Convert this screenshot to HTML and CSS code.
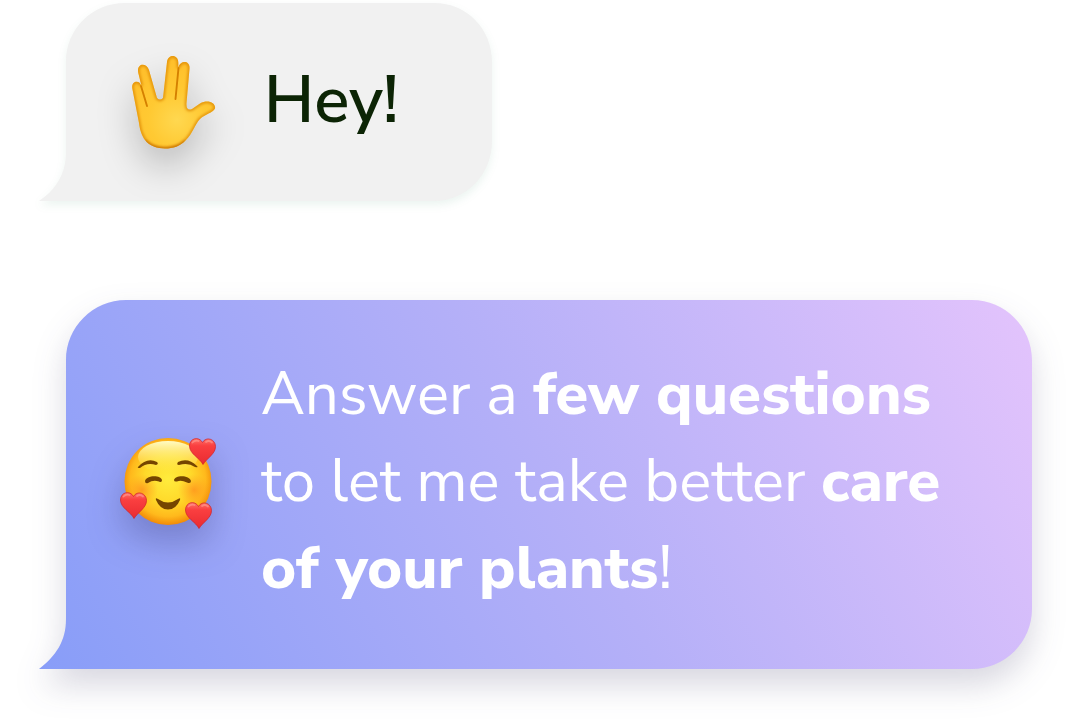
FILE: index.html
```html
<!DOCTYPE html>
<html lang="en">
<head>
<meta charset="utf-8">
<title>Plant chat</title>
<link rel="stylesheet" href="styles.css">
</head>
<body>
<main class="chat">
  <section class="bubble bubble-hello">
    <svg class="shape shape-hello" width="454" height="198" viewBox="0 0 454 198" aria-hidden="true">
      <path fill="#f1f1f1" d="M86 0H395C428 0 453 26 453 59V138C453 171 428 198 395 198H0C17 187 27 170 27 150V59C27 26 53 0 86 0Z"/>
    </svg>
    <svg class="emoji emoji-hand" width="84" height="96" viewBox="0 0 84 96" role="img" aria-label="Raised hand">
      <defs>
        <radialGradient id="palm" gradientUnits="userSpaceOnUse" cx="45" cy="65" r="57">
          <stop offset="0" stop-color="#ffd850"/><stop offset=".5" stop-color="#ffc932"/><stop offset="1" stop-color="#ffc02c"/>
        </radialGradient>
        <path id="hand" d="M7 68L.4 34C-1.500 26 7.500 24 9.500 31L6.300 18C4 8 14.500 7 17 15L25 43Q28 46 31 43L35 7C36-1 46.500-1 46.300 8V13C48 5 58.500 5 57.500 14L54.500 48Q54 56.500 60 54L68 48.500C76 44 84 48 83 53.500C81 58 73 59 68 64C63 69 61 78 54 85C48 91.500 41 93.500 33 93.500C17 93 9 85 7 68Z"/>
        <clipPath id="handClip"><use href="#hand"/></clipPath>
        <filter id="soft" x="-20%" y="-20%" width="140%" height="140%"><feGaussianBlur stdDeviation="1.5"/></filter>
        <filter id="fine" x="-20%" y="-20%" width="140%" height="140%"><feGaussianBlur stdDeviation=".6"/></filter>
      </defs>
      <g clip-path="url(#handClip)">
        <rect x="-2" y="-2" width="88" height="98" fill="url(#palm)"/>
        <use href="#hand" fill="none" stroke="#dc8500" stroke-width="2.600" filter="url(#soft)"/>
        <path fill="none" stroke="#b96200" stroke-width="2.500" filter="url(#soft)" d="M12 86C22 96.500 44 97 54 87"/>
        <path fill="none" stroke="#d58000" stroke-width="1.900" stroke-linecap="round" filter="url(#fine)" d="M9 31L15 51M46.500 13L43.500 44"/>
      </g>
    </svg>
    <p class="hello">Hey!</p>
  </section>

  <section class="bubble bubble-questions">
    <svg class="shape shape-questions" width="993" height="369" viewBox="0 0 993 369" aria-hidden="true">
      <defs>
        <linearGradient id="lavender" gradientUnits="userSpaceOnUse" x1="0" y1="369" x2="915" y2="-115">
          <stop offset="0" stop-color="#889df8"/><stop offset=".53" stop-color="#b5b0f8"/><stop offset="1" stop-color="#e2c3fc"/>
        </linearGradient>
      </defs>
      <path fill="url(#lavender)" d="M87 0H933C966 0 993 27 993 60V309C993 342 966 369 933 369H0C17 356 27 341 27 319V60C27 27 54 0 87 0Z"/>
    </svg>
    <svg class="emoji emoji-face" width="96" height="92" viewBox="0 0 96 92" role="img" aria-label="Smiling face with hearts">
      <defs>
        <radialGradient id="skin" gradientUnits="userSpaceOnUse" cx="48" cy="42" r="47">
          <stop offset="0" stop-color="#ffec3d"/><stop offset=".5" stop-color="#ffd92a"/><stop offset=".8" stop-color="#ffb91c"/><stop offset="1" stop-color="#f08405"/>
        </radialGradient>
        <linearGradient id="gloss" x1="0" y1="0" x2="0" y2="1">
          <stop offset="0" stop-color="#fffcc5"/><stop offset="1" stop-color="#fff15a" stop-opacity="0"/>
        </linearGradient>
        <radialGradient id="blush"><stop offset="0" stop-color="#ff8a1c" stop-opacity=".7"/><stop offset="1" stop-color="#ff9a20" stop-opacity="0"/></radialGradient>
        <linearGradient id="red" x1="0" y1="0" x2="0" y2="1">
          <stop offset="0" stop-color="#ff7369"/><stop offset=".28" stop-color="#fa3f40"/><stop offset="1" stop-color="#e92b31"/>
        </linearGradient>
        <g id="heart">
          <path fill="url(#red)" stroke="#cf2026" stroke-width=".7" d="M14 26.500C11 20 .5 16 .5 8C.5 0 10-2 13.500 4.500C17-2 26.500 1 26.500 8.500C26.500 16 18 20 14 26.500Z"/>
          <path fill="none" stroke="#ffaaa1" stroke-width="1.800" stroke-linecap="round" opacity=".5" d="M3.500 4.500Q6 1.800 9.500 3M17 4Q20 1.800 23 4.500"/>
        </g>
      </defs>
      <circle cx="48" cy="44.500" r="43.500" fill="url(#skin)"/>
      <ellipse cx="48" cy="20" rx="30" ry="16" fill="url(#gloss)"/>
      <circle cx="22" cy="53" r="16" fill="url(#blush)"/><circle cx="74" cy="53" r="16" fill="url(#blush)"/>
      <g fill="#754500">
        <path d="M18 30Q27 20 37 25Q39 27 36 28Q27 25 20 31Q17 31 18 30Z"/>
        <path d="M58 25Q68 20 77 29Q79 31 75 30Q68 25 59 28Q56 28 58 25Z"/>
        <path d="M25 44C26 38 41 37.500 42 43Q42 46 39 44.500Q33 42.500 28 46Q25 47 25 44Z"/>
        <path d="M54 43C55 37.500 70 38 71 44Q71 47 67 45.500Q61 42.500 57 44.500Q54 45 54 43Z"/>
        <path d="M36 63Q35 60 38 62Q48 69 58 62Q61 60 60 63Q56 72.500 48 72.500Q40 72.500 36 63Z"/>
      </g>
      <use href="#heart" transform="translate(69 1)"/>
      <use href="#heart" transform="translate(0 55)"/>
      <use href="#heart" transform="translate(65 65)"/>
    </svg>
    <p class="prompt">
      <span class="line"><span>Answer a </span><strong>few questions</strong></span>
      <span class="line"><span>to let me take better </span><strong>care</strong></span>
      <span class="line"><strong>of your plants</strong><span>!</span></span>
    </p>
  </section>
</main>
</body>
</html>
```
FILE: styles.css
```css
body {
  margin: 0;
  background: #fff;
  font-family: "Nunito Sans", Nunito, Lato, "Open Sans", sans-serif;
  overflow: hidden;
}
.chat {
  display: flex;
  flex-direction: column;
  align-items: flex-start;
  gap: 99px;
  padding: 3px 39px 57px 66px;
}
.bubble {
  position: relative;
  display: flex;
  box-sizing: border-box;
}
.bubble-hello { width: 426px; height: 198px; padding: 52px 0 0 66px; gap: 50px; }
.bubble-questions { width: 966px; height: 369px; padding: 51px 0 0 54px; gap: 45px; }
.shape {
  position: absolute;
  left: -27px;
  top: 0;
  overflow: visible;
}
.shape-hello { filter: drop-shadow(0 4px 4px rgba(0, 110, 60, .08)); }
.shape-questions { filter: drop-shadow(0 16px 16px rgba(50, 45, 90, .19)); }
.emoji { position: relative; flex: none; overflow: visible; }
.emoji-hand { filter: drop-shadow(0 18px 18px rgba(0, 0, 0, .21)); }
.emoji-face { margin-top: 86px; filter: drop-shadow(0 18px 17px rgba(35, 35, 90, .28)); }
.hello {
  position: relative;
  margin: 3px 0 0 -2px;
  color: #0c2405;
  font-size: 65.5px;
  line-height: 86px;
  font-weight: 600;
}
.prompt {
  position: relative;
  margin: 0;
  color: #fff;
  font-size: 60px;
  line-height: 87px;
  font-weight: 400;
  white-space: pre;
  display: flex;
  flex-direction: column;
}
.line { display: block; }
strong { font-weight: 800; }
```
